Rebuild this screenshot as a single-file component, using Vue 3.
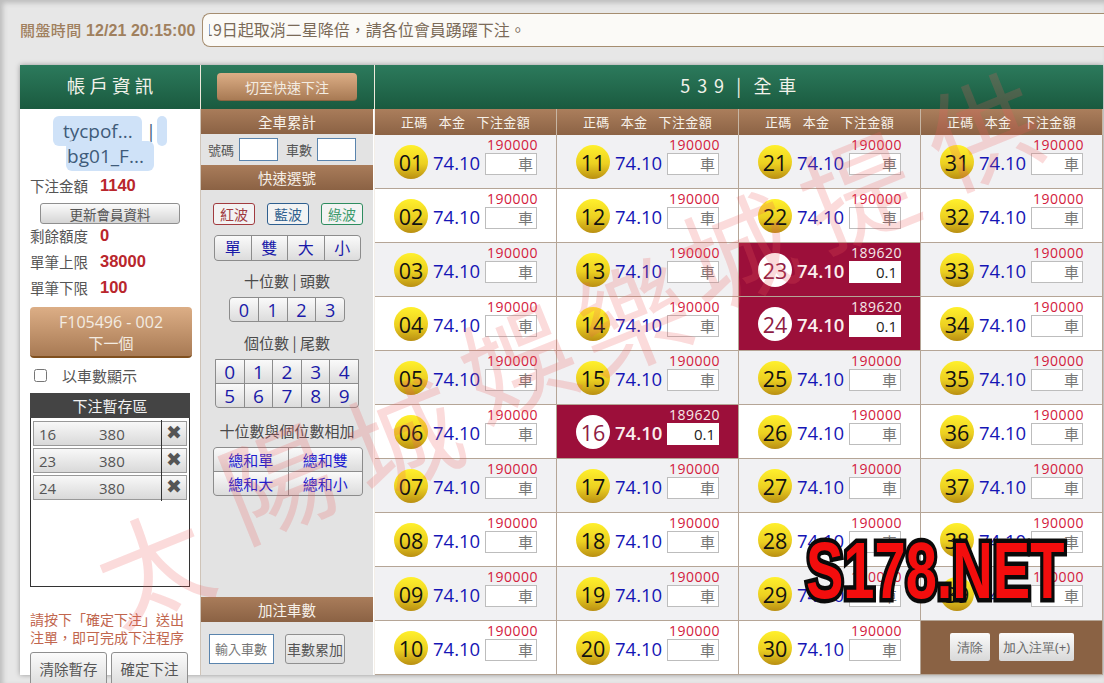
<script setup>
const selected = { 16: 189620, 23: 189620, 24: 189620 }
const cells = Array.from({ length: 39 }, (_, i) => {
  const n = i + 1
  const label = String(n).padStart(2, '0')
  return {
    n,
    label,
    striped: i % 10 % 2 === 0,
    on: !!selected[n],
    limit: selected[n] || 190000
  }
})
const saved = ['16', '23', '24']
const pad1 = ['0', '1', '2', '3']
const pad2 = ['0', '1', '2', '3', '4', '5', '6', '7', '8', '9']
const marks = '太陽城娛樂城提供'.split('')
</script>

<template>
  <div class="page">
    <div class="top">
      <span class="time"><span class="time-l">關盤時間</span> 12/21 20:15:00</span>
      <div class="notice"><span>19日起取消二星降倍，請各位會員踴躍下注。</span></div>
    </div>

    <div class="board">
      <aside class="acct">
        <div class="green title">帳 戶 資 訊</div>
        <div class="acct-body">
          <div class="who"><mark class="m1">tycpof...</mark><span class="bar">|</span><mark class="stub">&nbsp;</mark> <mark class="m2">bg01_F...</mark></div>
          <div class="stat first"><span>下注金額</span><b>1140</b></div>
          <button class="btn refresh">更新會員資料</button>
          <div class="stat s2"><span>剩餘額度</span><b>0</b></div>
          <div class="stat"><span>單筆上限</span><b>38000</b></div>
          <div class="stat"><span>單筆下限</span><b>100</b></div>
          <button class="tan next"><span class="next-a">F105496 - 002</span><br />下一個</button>
          <label class="check"><input type="checkbox" /><span>以車數顯示</span></label>
          <div class="hold">
            <div class="hold-head">下注暫存區</div>
            <div class="hold-list">
              <div v-for="s in saved" :key="s" class="hold-row">
                <span class="h-no">{{ s }}</span>
                <span class="h-amt">380</span>
                <span class="h-x">✖</span>
              </div>
            </div>
          </div>
          <p class="hint">請按下「確定下注」送出注單，即可完成下注程序</p>
          <div class="acts">
            <button class="btn act">清除暫存</button>
            <button class="btn act">確定下注</button>
          </div>
        </div>
      </aside>

      <section class="mid">
        <div class="green mid-head"><button class="tan swap">切至快速下注</button></div>
        <div class="brown">全車累計</div>
        <div class="tally">
          <span>號碼</span><input class="field" />
          <span class="tally-b">車數</span><input class="field" />
        </div>
        <div class="brown">快速選號</div>
        <div class="waves">
          <button class="wave red">紅波</button>
          <button class="wave blue">藍波</button>
          <button class="wave grn">綠波</button>
        </div>
        <div class="pad pad-a">
          <button v-for="k in ['單','雙','大','小']" :key="k">{{ k }}</button>
        </div>
        <div class="cap">十位數 | 頭數</div>
        <div class="pad pad-b">
          <button v-for="k in pad1" :key="k">{{ k }}</button>
        </div>
        <div class="cap cap-2">個位數 | 尾數</div>
        <div class="pad pad-c">
          <button v-for="k in pad2" :key="k">{{ k }}</button>
        </div>
        <div class="cap cap-sum">十位數與個位數相加</div>
        <div class="pad pad-d">
          <button v-for="k in ['總和單','總和雙','總和大','總和小']" :key="k">{{ k }}</button>
        </div>
        <div class="grow"></div>
        <div class="brown">加注車數</div>
        <div class="addon">
          <input class="add-in" placeholder="輸入車數" />
          <button class="btn add-btn">車數累加</button>
        </div>
      </section>

      <section class="main">
        <div class="green main-head">5 3 9 &nbsp;|&nbsp; 全 車</div>
        <div class="cols">
          <div v-for="c in 4" :key="c" class="col-h">
            <span>正碼</span><span>本金</span><span>下注金額</span>
          </div>
        </div>
        <div class="grid">
          <div
            v-for="c in cells"
            :key="c.n"
            class="cell"
            :class="{ striped: c.striped, on: c.on }"
          >
            <span class="ball">{{ c.label }}</span>
            <span class="odds">74.10</span>
            <div class="bet">
              <span class="limit">{{ c.limit }}</span>
              <input class="amt" :value="c.on ? '0.1' : ''" placeholder="車" />
            </div>
          </div>
          <div class="cell submit">
            <button class="btn clear">清除</button>
            <button class="btn push">加入注單(+)</button>
          </div>
        </div>
      </section>
    </div>

    <div class="wm">
      <span v-for="(m, i) in marks" :key="i" class="wm-ch" :class="'w' + i">{{ m }}</span>
    </div>
    <div class="logo"><span>S178.NET</span></div>
  </div>
</template>

<style scoped>
.page {
  position: relative;
  width: 1104px;
  height: 683px;
  overflow: hidden;
  background: #e7e7e7;
  box-shadow: inset 3px 3px 5px #bdbdbd;
  font-family: "Noto Sans CJK TC", sans-serif;
  font-size: 14.5px;
  color: #444;
}
button { font-family: inherit; cursor: pointer; padding: 0; }
.top {
  display: flex;
  align-items: center;
  height: 34px;
  padding: 13px 0 0 20px;
}
.time {
  width: 182px;
  flex: none;
  margin-top: -2px;
  font: bold 16px "Liberation Sans", "Noto Sans CJK TC", sans-serif;
  letter-spacing: .05px;
  color: #a0805e;
  white-space: nowrap;
}
.time-l { font-size: 15px; font-weight: 500; letter-spacing: .4px; }
.notice {
  flex: 1;
  height: 34px;
  box-sizing: border-box;
  border: 1px solid #a58d70;
  border-right: 0;
  border-radius: 8px 0 0 8px;
  background: #fbfaf7;
  overflow: hidden;
  margin-right: -8px;
  padding-left: 6px;
  line-height: 30px;
  font-size: 16px;
  color: #7a6a58;
  white-space: nowrap;
}
.notice span { margin-left: -5px; display: inline-block; clip-path: inset(0 0 0 5px); }
.board {
  display: grid;
  grid-template-columns: 181px 173px 729px;
  grid-template-rows: 610px;
  width: 1083px;
  height: 610px;
  margin: 18px 0 0 20px;
  box-shadow: 0 0 5px rgba(0, 0, 0, .35);
  background: #fff;
}
.green {
  height: 44px;
  background: linear-gradient(#2c7a5c, #1a5a3f);
  color: #f2f2ea;
  display: flex;
  align-items: center;
  justify-content: center;
}
.title {
  font-size: 18.5px;
  padding-bottom: 5px;
  box-sizing: border-box;
  border-right: 1px solid #f0e9dc;
}
.acct { border-right: 1px solid #cfc4b8; box-sizing: border-box; min-height: 0; }
.acct .title { margin-right: -1px; }
.acct-body { padding: 8px 0 0 10px; }
.who {
  width: 160px;
  text-align: center;
  font: 19px/25px "Open Sans", sans-serif;
  color: #3f5f7f;
  padding-top: 2px;
  margin-bottom: 3px;
}
.who mark {
  background: #cfe2f8;
  color: #3f5b7a;
  border-radius: 6px;
  padding: 2px 9px 2px 10px;
}
.who .bar { margin: 0 1px 0 4px; }
.who .stub { padding: 2px 2.5px; }
.who .m2 { padding: 2px 10px 2px 1px; }
.stat {
  display: flex;
  gap: 12px;
  align-items: center;
  height: 26px;
  color: #555;
}
.stat b {
  font: bold 16.5px "Liberation Sans", sans-serif;
  color: #b9262c;
}
.s2 { margin-top: -2px; }
.btn {
  border: 1px solid #8f8f8f;
  border-radius: 3px;
  background: linear-gradient(#fbfbfb, #d5d5d5);
  color: #555;
}
.refresh {
  display: block;
  width: 140px;
  height: 21px;
  margin: 5px 0 0 10px;
  font-size: 13.5px;
  line-height: 18px;
}
.tan {
  border: 0;
  border-radius: 4px;
  color: #f3ece2;
  background: linear-gradient(#dcae86, #a87a54);
}
.next {
  display: block;
  width: 162px;
  height: 51px;
  margin-top: 7px;
  font-size: 15px;
  line-height: 20px;
  border-bottom: 2px solid #80501f;
}
.next-a { font: 16px "Open Sans", sans-serif; }
.check {
  display: flex;
  align-items: center;
  height: 20px;
  margin: 7px 0 8px 4px;
  font-size: 15px;
  color: #555;
}
.check input { margin: 0 15px 0 0; width: 13px; height: 13px; }
.hold {
  width: 160px;
  height: 194px;
  box-sizing: border-box;
  border: 1px solid #333;
  background: #fff;
}
.hold-head {
  height: 25px;
  margin: -1px -1px 0;
  background: #444;
  color: #f2f2f2;
  text-align: center;
  line-height: 25px;
  font-size: 15px;
}
.hold-list { padding: 3px 2px 0; }
.hold-row {
  display: flex;
  align-items: center;
  height: 25px;
  margin-bottom: 2px;
  box-sizing: border-box;
  border: 1px solid #999;
  background: linear-gradient(#f8f8f8, #d9d9d9);
  font: 15px "Open Sans", sans-serif;
  color: #555;
}
.h-no { width: 59px; padding-left: 5px; box-sizing: border-box; }
.h-amt { width: 69px; padding-left: 6px; box-sizing: border-box; flex: 1; }
.h-x {
  width: 25px;
  height: 27px;
  flex: none;
  border-left: 1px solid #333;
  box-sizing: border-box;
  text-align: center;
  line-height: 25px;
  font-size: 19px;
  font-family: "DejaVu Sans", sans-serif;
}
.hint {
  width: 160px;
  margin: 23px 0 0;
  font-size: 14px;
  line-height: 18px;
  color: #c1664e;
}
.acts { display: flex; gap: 4px; margin-top: 6px; }
.act { width: 77px; height: 42px; padding-bottom: 10px; font-size: 14.5px; }

.mid {
  display: flex;
  flex-direction: column;
  background: #e3e3e3;
  border-right: 1px solid #fff;
  min-height: 0;
}
.mid-head { margin-right: -1px; }
.swap {
  width: 140px;
  height: 28px;
  font-size: 14px;
  margin-right: 1px;
  border-bottom: 1px solid #8c6541;
}
.brown {
  height: 25px;
  flex: none;
  background: linear-gradient(#a97c5a, #8b6244);
  color: #f7f1e9;
  text-align: center;
  line-height: 25px;
  font-size: 14.5px;
}
.tally {
  display: flex;
  align-items: center;
  height: 31px;
  padding-left: 7px;
  font-size: 13px;
  color: #555;
}
.tally-b { margin-left: 8px; }
.field {
  width: 39px;
  height: 23px;
  box-sizing: border-box;
  margin-left: 5px;
  border: 1px solid #5a84ad;
  background: #fff;
  padding: 0;
}
.waves { display: flex; gap: 12px; padding: 13px 0 0 12px; }
.wave {
  width: 42px;
  height: 22px;
  border-radius: 3px;
  background: #f3f3f3;
  font-size: 14px;
  line-height: 18px;
}
.red { border: 1px solid #a13b3f; color: #a13b3f; }
.blue { border: 1px solid #2f5f8f; color: #2f5f8f; }
.grn { border: 1px solid #2e8c5f; color: #3b9a6b; }
.pad {
  display: grid;
  border: 1px solid #8c8c8c;
  border-radius: 4px;
  overflow: hidden;
  background: #8c8c8c;
  gap: 1px;
}
.pad button {
  border: 0;
  background: linear-gradient(#fafafa, #dcdcdc);
  color: #1a1aa8;
  font-family: "Open Sans", "Noto Sans CJK TC", sans-serif;
}
.pad-a {
  grid-template-columns: repeat(4, 1fr);
  width: 147px;
  height: 26px;
  box-sizing: border-box;
  margin: 10px 0 0 13px;
}
.pad-a button { font-size: 16px; line-height: 20px; }
.pad-b {
  grid-template-columns: repeat(4, 1fr);
  width: 116px;
  height: 25px;
  box-sizing: border-box;
  margin: 6px 0 0 28px;
}
.pad-b button { font-size: 18px; line-height: 20px; }
.pad-c {
  grid-template-columns: repeat(5, 1fr);
  width: 144px;
  height: 49px;
  box-sizing: border-box;
  margin: 6px 0 0 14px;
  border-radius: 0 0 4px 4px;
}
.pad-c button { font-size: 19px; line-height: 20px; }
.pad-d {
  grid-template-columns: 1fr 1fr;
  width: 150px;
  height: 49px;
  box-sizing: border-box;
  margin: 6px 0 0 12px;
}
.pad-d button { font-size: 15px; line-height: 20px; color: #1c1cd0; }
.cap {
  text-align: center;
  height: 20px;
  margin-top: 10px;
  line-height: 20px;
  font-size: 15px;
  color: #4a4a4a;
}
.cap-2 { margin-top: 11px; }
.cap-sum { margin-top: 13px; }
.grow { flex: 1; }
.addon {
  display: flex;
  align-items: center;
  gap: 11px;
  height: 53px;
  padding: 0 0 0 8px;
}
.add-in {
  width: 65px;
  height: 30px;
  box-sizing: border-box;
  border: 1px solid #5a84ad;
  padding: 0 0 0 5px;
  font: 13px "Noto Sans CJK TC", sans-serif;
  background: #fff;
}
.add-in::placeholder { color: #777; opacity: 1; }
.add-btn { width: 60px; height: 30px; font-size: 14px; background: linear-gradient(#f1f1f1, #dedede); }

.main { border-left: 1px solid #f4efe8; box-sizing: border-box; }
.main-head {
  font-size: 18px;
  letter-spacing: 1.4px;
  padding-bottom: 4px;
  box-sizing: border-box;
  margin-left: -1px;
  border-left: 1px solid #f0e9dc;
}
.cols { display: grid; grid-template-columns: repeat(4, 182px); }
.col-h {
  display: flex;
  justify-content: center;
  gap: 11px;
  height: 26px;
  line-height: 25px;
  padding-bottom: 1px;
  box-sizing: border-box;
  background: linear-gradient(#ab7e5c, #8c6345);
  color: #f7f1e9;
  border-right: 1px solid #c7b6a4;
  font-size: 13px;
  letter-spacing: .4px;
}
.grid {
  display: grid;
  grid-template-columns: repeat(4, 182px);
  grid-template-rows: repeat(10, 54px);
  grid-auto-flow: column;
  margin-top: -1px;
  border-top: 1px solid #b5a596;
  height: 541px;
  box-sizing: border-box;
}
.cell {
  display: flex;
  align-items: center;
  box-sizing: border-box;
  height: 54px;
  padding-left: 19px;
  border-right: 1px solid #b5a596;
  border-bottom: 1px solid #b5a596;
  background: #fff;
  font-family: "Open Sans", sans-serif;
}
.striped { background: #f1f1f3; }
.ball {
  flex: none;
  width: 34px;
  height: 34px;
  border-radius: 50%;
  background: linear-gradient(#fff02c, #ecd021 55%, #b98f12);
  color: #111;
  text-align: center;
  font-size: 21.5px;
  line-height: 36px;
}
.odds { margin-left: 5px; width: 48px; font-size: 18.5px; line-height: 28px; padding-top: 2px; color: #1515b5; }
.bet { margin-left: 4px; width: 52px; padding-top: 1px; align-self: flex-start; }
.limit {
  display: block;
  height: 17px;
  line-height: 17px;
  text-align: right;
  font-size: 14px;
  letter-spacing: .5px;
  color: #d3203c;
  margin-right: -1px;
}
.amt {
  display: block;
  width: 52px;
  height: 22px;
  box-sizing: border-box;
  border: 1px solid #bdbdbd;
  padding: 0 3px 0 0;
  background: #fff;
  text-align: right;
  font: 15px "Open Sans", "Noto Sans CJK TC", sans-serif;
  color: #222;
}
.amt::placeholder { color: #777; opacity: 1; }
.on { background: #9c0f3a; }
.on .ball {
  background: #fff;
  color: #8e1c44;
}
.on .odds { color: #fbeeee; font-weight: 600; }
.on .limit { color: #f7e9e9; }
.on .amt { border-color: #fff; }
.submit {
  background: #8a6244;
  padding: 0 0 1px 29px;
  gap: 9px;
}
.clear, .push {
  height: 28px;
  border: 0;
  border-radius: 2px;
  background: linear-gradient(#fbfbfb, #d8d8d8);
  font-size: 13px;
  color: #666;
}
.clear { width: 40px; }
.push { width: 75px; white-space: nowrap; }

.wm {
  position: absolute;
  inset: 0;
  pointer-events: none;
  color: rgba(238, 90, 90, .22);
  font-size: 112px;
  font-family: "Noto Sans CJK TC", sans-serif;
  font-weight: 400;
  line-height: 1;
}
.wm-ch { position: absolute; transform: rotate(-22deg); }
.w0 { left: 95px; top: 505px; }
.w1 { left: 220px; top: 420px; }
.w2 { left: 345px; top: 375px; }
.w3 { left: 460px; top: 300px; }
.w4 { left: 575px; top: 255px; }
.w5 { left: 680px; top: 190px; }
.w6 { left: 800px; top: 130px; }
.w7 { left: 925px; top: 70px; }
.logo {
  position: absolute;
  left: 806px;
  top: 529px;
  width: 262px;
  height: 84px;
  pointer-events: none;
}
.logo span {
  display: block;
  width: 373px;
  font: bold 80px/84px "Liberation Sans", sans-serif;
  color: #f30d0d;
  -webkit-text-stroke: 9px #0a0a0a;
  paint-order: stroke fill;
  stroke-linejoin: round;
  transform: scaleX(.7);
  transform-origin: 0 50%;
  white-space: nowrap;
}
</style>
